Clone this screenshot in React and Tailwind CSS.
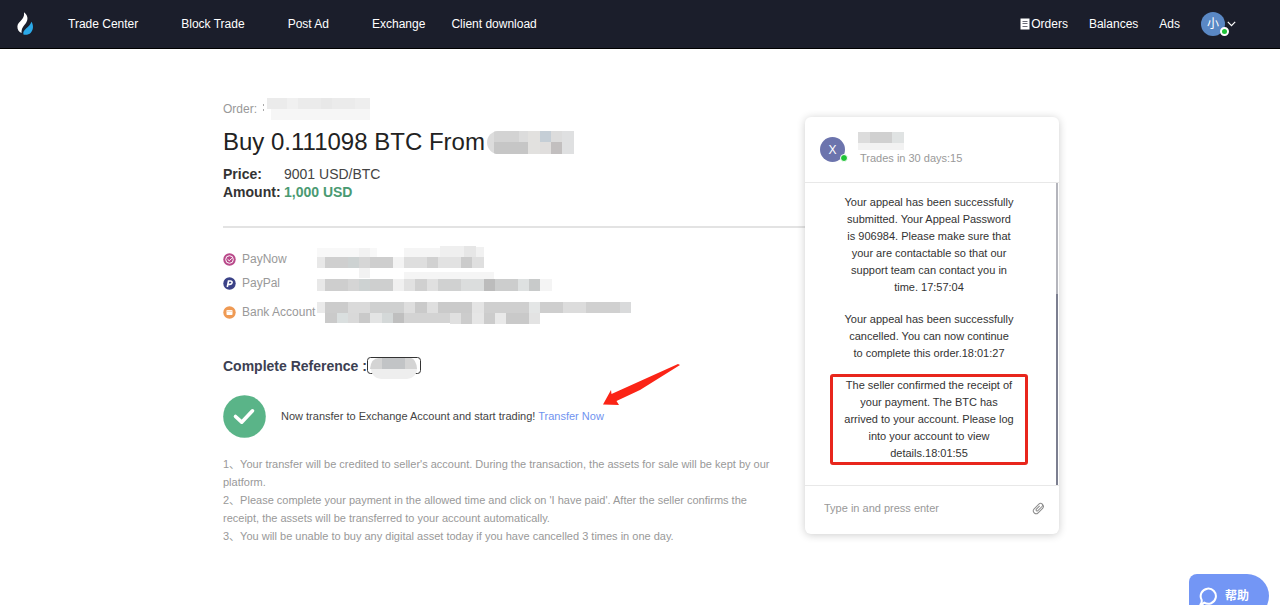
import React from "react";

const leftLinks = ["Trade Center", "Block Trade", "Post Ad"];
const rightLinks = ["Exchange", "Client download"];

const notes = [
  "Your transfer will be credited to seller's account. During the transaction, the assets for sale will be kept by our platform.",
  "Please complete your payment in the allowed time and click on 'I have paid'. After the seller confirms the receipt, the assets will be transferred to your account automatically.",
  "You will be unable to buy any digital asset today if you have cancelled 3 times in one day.",
];

// hidden values, each block is [x, y, width, height, color]
const hiddenOrder = [
  [0, 6, 1, 2, "#aaaaaa"],
  [0, 11, 1, 2, "#aaaaaa"],
  [4, 0, 103, 11, "#ebebeb"],
  [8, 11, 99, 11, "#f6f6f6"],
  [24, 0, 11, 11, "#f0f0f0"],
  [58, 0, 11, 11, "#e8e8e8"],
  [92, 0, 15, 11, "#eeeeee"],
];

const hiddenSeller = [
  [0, 0, 87, 23, "#dcdcdc"],
  [7, 0, 25, 11, "#d3d3d3"],
  [7, 11, 34, 12, "#c6c6c6"],
  [41, 0, 12, 23, "#e2e1df"],
  [53, 0, 11, 11, "#c5ced6"],
  [53, 11, 11, 12, "#e0dedd"],
  [64, 11, 11, 12, "#c2bfbf"],
  [75, 0, 12, 23, "#dfe0e1"],
];

const hiddenMethods = [
  [3, 4, 60, 9, "#f8f8f8"],
  [45, 4, 11, 30, "#f2f2f2"],
  [90, 4, 36, 9, "#f5f5f5"],
  [126, 2, 24, 11, "#efefef"],
  [150, 2, 12, 11, "#e6e6e6"],
  [162, 3, 8, 10, "#f1f1f1"],
  [3, 13, 8, 11, "#e8e8e8"],
  [11, 13, 23, 11, "#cfcfcf"],
  [34, 13, 11, 11, "#cdd2d2"],
  [45, 13, 11, 11, "#d6d6d6"],
  [56, 13, 23, 11, "#cecece"],
  [79, 13, 11, 11, "#f3f3f3"],
  [90, 13, 23, 11, "#dedede"],
  [113, 13, 11, 11, "#d1d1d1"],
  [124, 13, 23, 11, "#e2e2e2"],
  [147, 13, 11, 11, "#cbcbcb"],
  [158, 13, 12, 11, "#dfdfdf"],
  [90, 28, 90, 7, "#f5f5f5"],
  [3, 35, 8, 12, "#e8e8e8"],
  [11, 35, 23, 12, "#cecece"],
  [34, 35, 11, 12, "#d5d5d5"],
  [45, 35, 11, 12, "#cdd2d2"],
  [56, 35, 23, 12, "#cecfcf"],
  [79, 35, 11, 12, "#f0f0f0"],
  [90, 35, 11, 12, "#e1e1e1"],
  [101, 35, 12, 12, "#d0d0d0"],
  [113, 35, 11, 12, "#e0e0e0"],
  [124, 35, 23, 12, "#d0d1d1"],
  [147, 35, 23, 12, "#dbdddd"],
  [170, 35, 11, 12, "#bcbcbc"],
  [181, 35, 23, 12, "#cccdcd"],
  [204, 35, 11, 12, "#dee1e1"],
  [215, 35, 11, 12, "#c8caca"],
  [226, 35, 12, 12, "#f4f4f4"],
  [3, 58, 8, 11, "#eaeaea"],
  [11, 58, 23, 11, "#cccccc"],
  [34, 58, 22, 11, "#dadada"],
  [56, 58, 34, 11, "#cfd0d0"],
  [90, 58, 11, 11, "#dedede"],
  [101, 58, 12, 11, "#cacaca"],
  [113, 58, 11, 11, "#dfdfdf"],
  [124, 58, 34, 11, "#cacaca"],
  [158, 58, 12, 11, "#e4e4e4"],
  [170, 58, 45, 11, "#cfcfcf"],
  [215, 58, 11, 11, "#e4e6e6"],
  [226, 58, 23, 11, "#cecece"],
  [249, 58, 23, 11, "#dcdcdc"],
  [272, 58, 34, 11, "#d0d0d0"],
  [306, 58, 11, 11, "#d9dadb"],
  [11, 69, 12, 10, "#cacaca"],
  [23, 69, 11, 10, "#dadfdf"],
  [34, 69, 11, 10, "#d9d9d9"],
  [45, 69, 11, 10, "#c9c9c9"],
  [56, 69, 12, 10, "#e3e4e4"],
  [68, 69, 11, 10, "#d4d8d8"],
  [79, 69, 11, 10, "#bfbfbf"],
  [90, 69, 46, 10, "#d3d3d3"],
  [136, 69, 11, 11, "#e0e0e0"],
  [147, 69, 11, 11, "#cccccc"],
  [158, 69, 12, 11, "#e6e6e6"],
  [170, 69, 11, 11, "#cccccc"],
  [181, 69, 11, 11, "#e9e9e9"],
  [192, 69, 23, 11, "#c9c9c9"],
  [215, 69, 11, 11, "#e3e3e3"],
];

const hiddenTrader = [
  [0, 0, 12, 11, "#dcdcdc"],
  [12, 0, 22, 11, "#d0d0d0"],
  [34, 0, 12, 11, "#e0e3e3"],
  [0, 11, 46, 7, "#f2f2f2"],
];

const Mosaic = ({ blocks, width, height, className }) => (
  <svg
    width={width}
    height={height}
    className={`shrink-0 ${className || ""}`}
    shapeRendering="crispEdges"
    aria-hidden="true"
  >
    {blocks.map(([x, y, w, h, fill], index) => (
      <rect key={index} x={x} y={y} width={w} height={h} fill={fill} />
    ))}
  </svg>
);

const Logo = () => (
  <svg width="18" height="24" viewBox="0 0 18 24" aria-hidden="true">
    <path
      fill="#ffffff"
      d="M8 0.3C12 3.4 12.4 7.4 10 11C8 14 5.2 15.8 5.6 21C2.8 19.8 1.2 17.4 1.4 14.2C1.8 9.2 9 8.2 8 0.3Z"
    />
    <path
      fill="#2ba9e8"
      d="M15.4 9.8C17.8 13.2 17.4 18 14.8 20.8C12.8 22.8 9.8 23.2 7.4 22.5C6.2 17.2 13.8 15.6 15.4 9.8Z"
    />
  </svg>
);

const Header = () => {
  return (
    <header className="flex h-[49px] items-center justify-between border-b border-black bg-[#1b1e2b] pr-11 pl-4 text-xs text-white">
      <div className="flex items-center gap-[34px]">
        <a href="#home" aria-label="Home">
          <Logo />
        </a>
        <nav className="flex items-center gap-[43px]">
          {leftLinks.map((link) => (
            <a key={link} href="#nav">
              {link}
            </a>
          ))}
          <div className="flex gap-[26px]">
            {rightLinks.map((link) => (
              <a key={link} href="#nav">
                {link}
              </a>
            ))}
          </div>
        </nav>
      </div>

      {/* account */}
      <div className="flex items-center gap-[21px]">
        <a href="#orders" className="flex items-center gap-px">
          <svg width="10" height="12" viewBox="0 0 10 12" aria-hidden="true">
            <path fill="#fff" d="M0.5 0.5h9v11h-9z" />
            <path stroke="#6b6d78" d="M2.5 3.5h5M2.5 5.5h5M2.5 8.5h5" />
          </svg>
          Orders
        </a>
        <a href="#balances">Balances</a>
        <a href="#ads">Ads</a>
        <button type="button" className="flex items-center gap-0.5">
          <span className="relative flex size-6 items-center justify-center rounded-full bg-[#5a88c4]">
            小
            <span className="absolute -right-1 bottom-0 size-[9px] rounded-full border-2 border-white bg-[#1ec336]"></span>
          </span>
          <svg width="9" height="6" viewBox="0 0 9 6" fill="none" stroke="#fff" aria-hidden="true">
            <path d="M0.8 0.8l3.7 3.9L8.2 0.8" strokeWidth="1.2" />
          </svg>
        </button>
      </div>
    </header>
  );
};

const OrderInfo = () => {
  return (
    <section>
      <div className="flex h-[22px] items-center gap-1.5 text-xs text-[#999]">
        Order:
        <Mosaic blocks={hiddenOrder} width={110} height={22} />
      </div>
      <div className="mt-2 flex items-center gap-0.5">
        <h1 className="text-2xl leading-7 text-[#222]">Buy 0.111098 BTC From</h1>
        <Mosaic blocks={hiddenSeller} width={87} height={23} className="rounded-l-xl" />
      </div>
      <dl className="mt-[9px] grid grid-cols-[61px_1fr] text-sm leading-[18px]">
        <dt className="font-bold text-[#333]">Price:</dt>
        <dd className="text-[#444]">9001 USD/BTC</dd>
        <dt className="font-bold text-[#333]">Amount:</dt>
        <dd className="font-bold text-[#4a9a72]">1,000 USD</dd>
      </dl>
    </section>
  );
};

const Payments = () => {
  return (
    <section className="flex h-[80px] text-xs leading-4 text-[#999]">
      <ul className="w-[91px] pt-[7px] whitespace-nowrap">
        <li className="flex items-center gap-1.5">
          <svg className="shrink-0" width="13" height="13" viewBox="0 0 13 13" fill="none" aria-hidden="true">
            <circle cx="6.5" cy="6.5" r="6.2" fill="#b9498a" />
            <circle cx="6.5" cy="6.5" r="3.8" stroke="#fff" />
            <path d="M4.6 6.3l1.7 1.5 2.6-2.6" stroke="#fff" />
          </svg>
          PayNow
        </li>
        <li className="mt-2 flex items-center gap-1.5">
          <svg className="shrink-0" width="13" height="13" viewBox="0 0 13 13" fill="none" aria-hidden="true">
            <circle cx="6.5" cy="6.5" r="6.2" fill="#3b4287" />
            <path d="M4.3 10l1.2-6h2c2.4 0 2 3.4-.5 3.4H5.3" stroke="#fff" strokeWidth="1.6" />
          </svg>
          PayPal
        </li>
        <li className="mt-[13px] flex items-center gap-1.5">
          <svg className="shrink-0" width="13" height="13" viewBox="0 0 13 13" aria-hidden="true">
            <circle cx="6.5" cy="6.5" r="6.2" fill="#ef9a54" />
            <rect x="3.5" y="4" width="6" height="5" rx="0.8" fill="#fff" />
            <path d="M3.5 5.3h6" stroke="#f7cba6" strokeWidth="0.8" />
          </svg>
          Bank Account
        </li>
      </ul>
      <Mosaic blocks={hiddenMethods} width={317} height={80} className="rounded" />
    </section>
  );
};

const TransferRow = () => {
  return (
    <div className="relative mt-[18px] flex items-center gap-[15px] text-[11px] text-[#444]">
      <svg width="43" height="43" viewBox="0 0 43 43" fill="none" aria-hidden="true">
        <circle cx="21.5" cy="21.5" r="21.3" fill="#5ab488" />
        <path
          d="M12.5 21.5l6.2 5.7L29.5 15.8"
          stroke="#fff"
          strokeWidth="3.6"
          strokeLinecap="round"
          strokeLinejoin="round"
        />
      </svg>
      <p>
        Now transfer to Exchange Account and start trading!{" "}
        <a href="#transfer" className="text-[#7093f0]">
          Transfer Now
        </a>
      </p>
      <svg
        className="absolute -top-8 left-[379px]"
        width="80"
        height="44"
        viewBox="0 0 80 44"
        aria-hidden="true"
      >
        <path fill="#fb2416" d="M76 1L78 2L38 27L14.5 38L17 42L1 41.5L9 27L9.5 31Z" />
      </svg>
    </div>
  );
};

const Chat = () => {
  return (
    <aside className="mt-[19px] w-[254px] shrink-0 self-start rounded-md bg-white text-[11px] shadow-[0_1px_8px_rgba(0,0,0,0.2)]">
      <div className="flex h-[66px] items-center gap-[13px] border-b border-[#e8e8e8] pl-[15px]">
        <span className="relative flex size-[25px] items-center justify-center rounded-full bg-[#6c74ad] text-xs text-white">
          X
          <span className="absolute -right-[3px] bottom-0 size-2 rounded-full border border-white bg-[#1ec336]"></span>
        </span>
        <div className="pb-0.5">
          <Mosaic blocks={hiddenTrader} width={46} height={18} />
          <p className="pl-0.5 leading-4 text-[#999]">Trades in 30 days:15</p>
        </div>
      </div>

      {/* messages */}
      <div className="flex h-[302px] justify-between">
        <div className="ml-[25px] flex w-[198px] flex-col items-center pt-[11px] text-center leading-[17px] text-[#333]">
          <p className="w-[171px]">
            Your appeal has been successfully submitted. Your Appeal Password is 906984. Please make
            sure that your are contactable so that our support team can contact you in time.
            17:57:04
          </p>
          <p className="mt-[15px] w-[171px]">
            Your appeal has been successfully cancelled. You can now continue to complete this
            order.18:01:27
          </p>
          <div className="mt-3 flex w-full justify-center rounded-[3px] border-3 border-[#e8261c]">
            <p className="w-[171px]">
              The seller confirmed the receipt of your payment. The BTC has arrived to your account.
              Please log into your account to view details.18:01:55
            </p>
          </div>
        </div>
        <div className="mr-px w-0.5 bg-[#b4b5bc] pt-[111px]">
          <div className="h-full bg-[#7c7f90]"></div>
        </div>
      </div>

      <div className="flex h-[49px] items-center justify-between border-t border-[#e8e8e8] pr-3.5 pb-1 pl-[19px]">
        <input
          type="text"
          aria-label="Message"
          placeholder="Type in and press enter"
          className="w-[180px] placeholder:text-[#999]"
        />
        <button type="button" aria-label="Attach file">
          <svg width="13" height="13" viewBox="0 0 13 13" fill="none" aria-hidden="true">
            <g stroke="#8c8c8c" strokeLinecap="round" transform="rotate(-45 6.5 6.5)">
              <path d="M9.5 9.3H3.2a2.8 2.8 0 0 1 0-5.6h6.6a2.4 2.4 0 0 1 2.4 2.4c0 1-.9 1.5-1.8 1.5H4.2a1.1 1.1 0 0 1 0-2.1h4.6" />
              <path d="M9.5 9.3c1.6 0 2.7-1.4 2.7-3.1" />
            </g>
          </svg>
        </button>
      </div>
    </aside>
  );
};

export default function App() {
  return (
    <div className="font-['Liberation_Sans','Noto_Sans_CJK_SC',sans-serif]">
      <Header />
      <main className="mx-auto flex max-w-[838px] pt-[49px] pl-0.5">
        <div className="min-w-0 flex-1">
          <OrderInfo />
          <hr className="mt-[25px] border-t-2 border-[#e3e3e3]" />
          <div className="mt-4">
            <Payments />
          </div>
          <div className="mt-[31px] flex h-[22px] items-center">
            <h2 className="text-sm font-bold text-[#3c4052]">Complete Reference :</h2>
            <svg width="54" height="26" viewBox="0 0 54 26" fill="none" aria-hidden="true">
              <rect x="0.5" y="4.5" width="53" height="16" rx="3" stroke="#333" />
              <rect x="4" y="5" width="46" height="21" rx="10" fill="#eeeeee" />
              <path d="M3 16Q4 5 12 5H44Q49 6 50 16Z" fill="#d4d4d4" />
              <path d="M15 5H38V16H15Z" fill="#c2c4c6" />
            </svg>
          </div>
          <TransferRow />
          <ul className="mt-[17px] pr-6 text-[11px] leading-[18px] text-[#999]">
            {notes.map((note, index) => (
              <li key={index}>{`${index + 1}、${note}`}</li>
            ))}
          </ul>
        </div>
        <Chat />
      </main>

      <button
        type="button"
        className="fixed right-[11px] -bottom-[13px] flex h-11 w-20 items-center gap-2 rounded-l-lg rounded-r-[22px] bg-[#7396f5] pl-2.5 text-xs font-bold text-white"
      >
        <svg width="18" height="19" viewBox="0 0 18 19" fill="none" aria-hidden="true">
          <path
            d="M5.2 15.6A7.6 7.6 0 1 0 2.6 12.8C3 14.6 2.4 16.4 1.4 17.4C3 17.4 4.4 16.8 5.2 15.6Z"
            stroke="#fff"
            strokeWidth="2"
            strokeLinejoin="round"
          />
        </svg>
        帮助
      </button>
    </div>
  );
}
